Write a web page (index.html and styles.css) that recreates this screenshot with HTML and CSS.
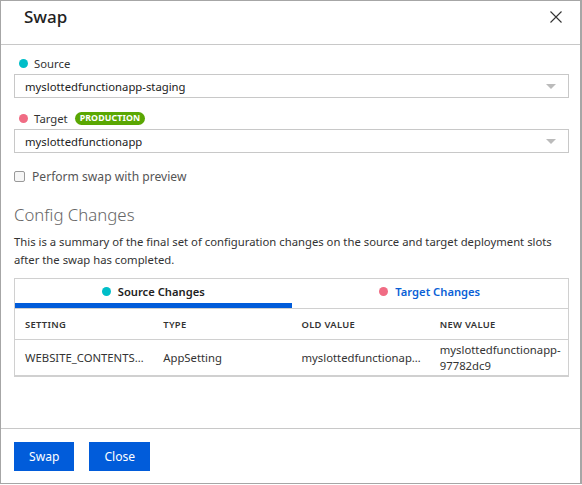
FILE: index.html
```html
<!DOCTYPE html>
<html>
<head>
<meta charset="utf-8">
<link rel="stylesheet" href="styles.css">
</head>
<body>
<div class="dialog">
  <div class="header">
    <div class="title">Swap</div>
    <svg class="close" width="12" height="12" viewBox="0 0 12 12"><path d="M0.5 0.5 L11.5 11.5 M11.5 0.5 L0.5 11.5" stroke="#333" stroke-width="1.1" fill="none"/></svg>
  </div>
  <div class="body">
    <div class="label"><span class="dot teal"></span>Source</div>
    <div class="select"><span>myslottedfunctionapp-staging</span><span class="arrow"></span></div>
    <div class="label target"><span class="dot pink"></span>Target<span class="badge">PRODUCTION</span></div>
    <div class="select"><span>myslottedfunctionapp</span><span class="arrow"></span></div>
    <label class="check"><span class="box"></span>Perform swap with preview</label>
    <div class="section">Config Changes</div>
    <p class="desc">This is a summary of the final set of configuration changes on the source and target deployment slots after the swap has completed.</p>
    <div class="table">
      <div class="tabs">
        <div class="tab active"><span class="dot teal"></span>Source Changes</div>
        <div class="tab link"><span class="dot pink"></span>Target Changes</div>
      </div>
      <div class="row head">
        <div>SETTING</div><div>TYPE</div><div>OLD VALUE</div><div>NEW VALUE</div>
      </div>
      <div class="row data">
        <div class="ell">WEBSITE_CONTENTSHARE</div><div>AppSetting</div><div class="ell">myslottedfunctionapp-staging-a1</div><div class="wrap">myslottedfunctionapp-97782dc9</div>
      </div>
    </div>
  </div>
  <div class="footer">
    <button class="btn">Swap</button>
    <button class="btn">Close</button>
  </div>
</div>
</body>
</html>
```
FILE: styles.css
```css
html, body { margin: 0; padding: 0; background: #fff; }
body { font-family: "Segoe UI", "Noto Sans", "Open Sans", sans-serif; font-size: 11.3px; color: #333; }
.dialog {
  width: 582px; height: 484px; box-sizing: border-box;
  border: 1px solid #a6a6a6; border-right-width: 2px;
  display: flex; flex-direction: column;
}
.header {
  height: 44px; flex: none; box-sizing: border-box; border-bottom: 1px solid #c8c8c8;
  display: flex; align-items: flex-start; justify-content: space-between;
  padding: 0 18px 0 23px;
}
.title { font-size: 17px; font-weight: 500; color: #222; margin-top: 4px; line-height: 23px; }
.close { margin-top: 10px; }
.body { flex: 1; padding: 10px 11px 0 13px; }
.label { display: flex; align-items: center; height: 16px; color: #333; margin-bottom: 3px; }
.label.target { margin-top: 12px; }
.dot { display: inline-block; width: 9px; height: 9px; border-radius: 50%; margin: 0 6px 0 5px; flex: none; }
.teal { background: #00bec8; }
.pink { background: #f06c84; }
.badge {
  margin-left: 7px; background: #5aa703; color: #fff; font-weight: 700; font-size: 8.8px;
  border-radius: 7px; padding: 0 5px; height: 13px; line-height: 13px; letter-spacing: 0.1px;
}
.select {
  height: 24px; box-sizing: border-box; border: 1px solid #c8c8c8;
  display: flex; align-items: center; justify-content: space-between; padding: 0 10px 0 10px;
  color: #222;
}
.arrow { width: 0; height: 0; border-left: 5px solid transparent; border-right: 5px solid transparent; border-top: 5px solid #bbb; margin-right: 2px; }
.check { display: flex; align-items: center; margin-top: 15px; height: 17px; color: #555; font-size: 12.1px; }
.box { width: 9px; height: 9px; border: 1px solid #999; border-radius: 2px; background: #f6f6f6; margin-right: 7px; }
.section { font-size: 16.8px; font-weight: 300; color: #666; margin-top: 18px; line-height: 23px; }
.desc { margin: 7px 0 9px; line-height: 18px; color: #333; }
.table { border: 1px solid #d0d0d0; border-bottom-width: 2px; }
.tabs { display: flex; border-bottom: 1px solid #d0d0d0; }
.tab {
  flex: 1; height: 29px; box-sizing: border-box; display: flex; align-items: center; justify-content: center;
  font-size: 11.2px; font-weight: 600; border-bottom: 5px solid transparent;
}
.tab.active { color: #222; border-bottom-color: #015cda; }
.tab.link { color: #0a5fd6; }
.tab .dot { margin: 0 7px 0 0; }
.row { display: grid; grid-template-columns: repeat(4, minmax(0, 1fr)); }
.row > div { padding: 0 10px; min-width: 0; }
.row.head { height: 30px; align-items: center; border-bottom: 1px solid #d0d0d0; font-size: 9.4px; font-weight: 600; color: #333; letter-spacing: 0.3px; }
.row.data { height: 35px; align-items: center; color: #333; }
.row.data > .wrap { padding-right: 4px; line-height: 16px; }
.row.data > .ell { padding-right: 5px; }
.ell { white-space: nowrap; overflow: hidden; text-overflow: ellipsis; }
.footer { height: 55px; flex: none; box-sizing: border-box; border-top: 1px solid #c8c8c8; display: flex; align-items: center; padding-left: 13px; gap: 15px; }
.btn {
  height: 29px; border: none; background: #015cda; color: #fff; font-family: inherit; font-size: 12.1px;
  padding: 0 15px; margin: 0;
}
```
